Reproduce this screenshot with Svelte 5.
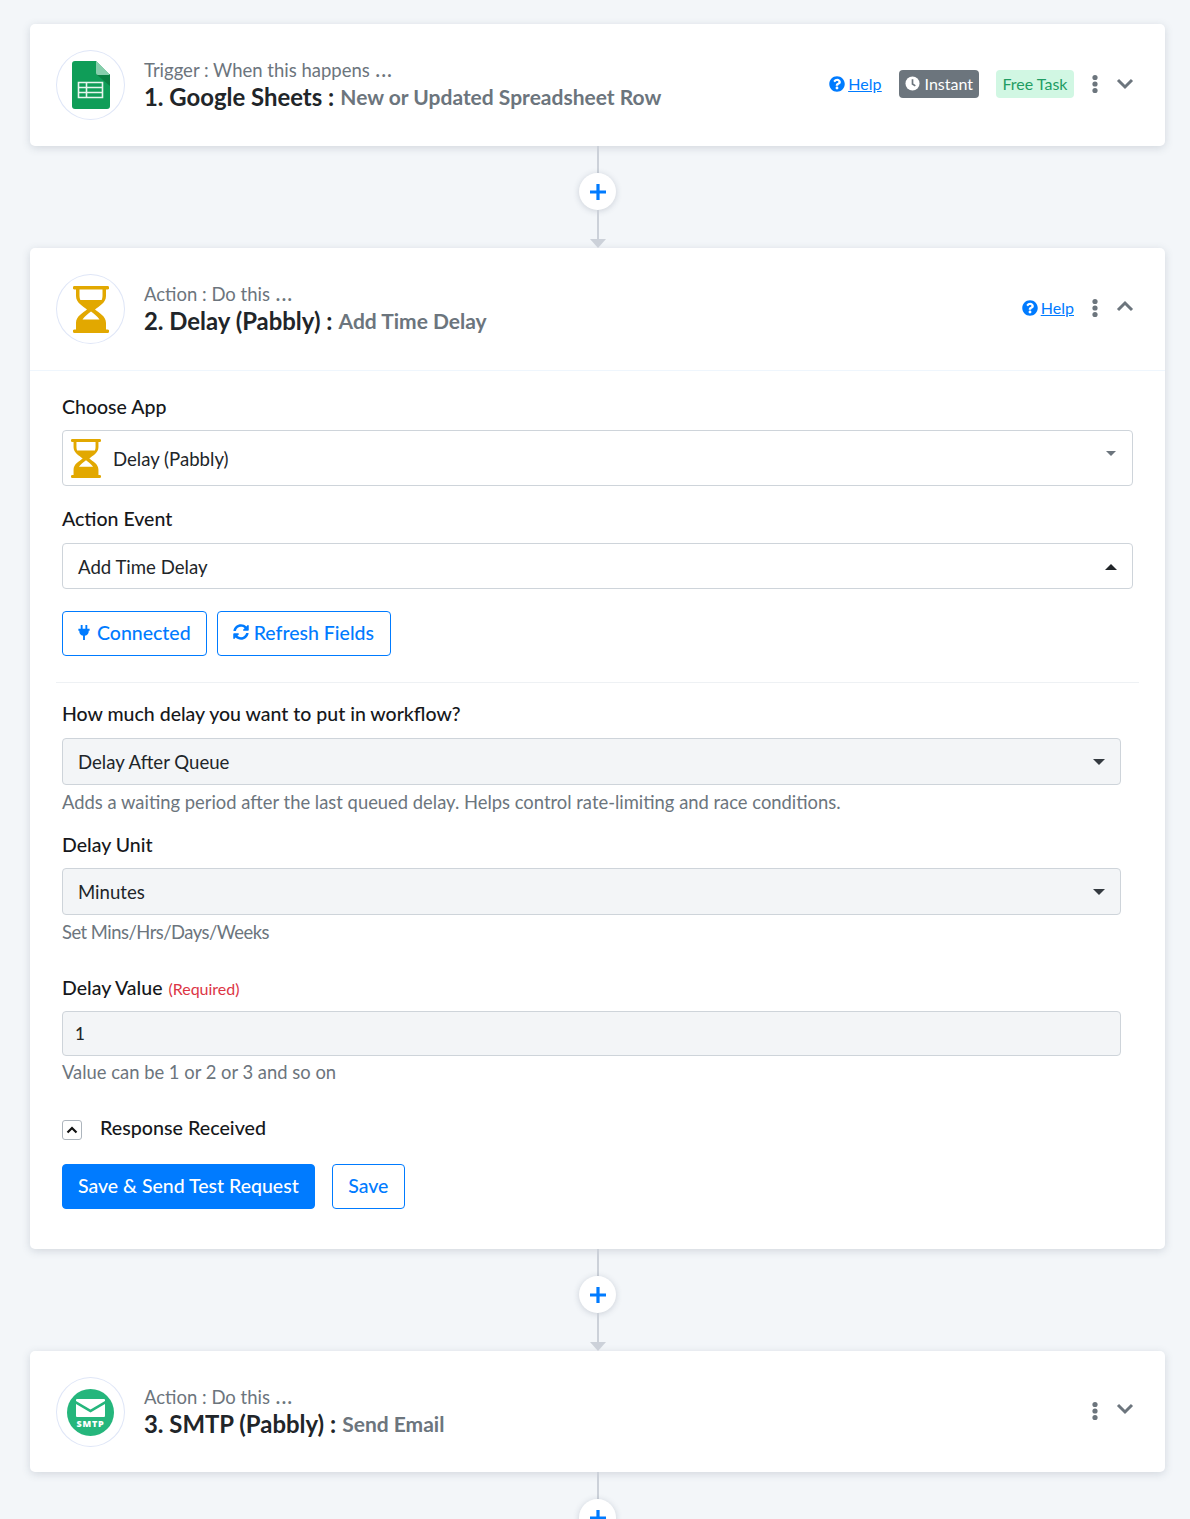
<script>
    const glassOuter = "M1.500 0h33a1.500 1.500 0 0 1 0 3.500H33V10c0 7-7 10-11 13.500 4 3.500 11 6.500 11 13.500v6.500h1.500a1.500 1.500 0 0 1 0 3.500h-33a1.500 1.500 0 0 1 0-3.500H3V37c0-7 7-10 11-13.500C10 20 3 17 3 10V3.500H1.500a1.500 1.500 0 0 1 0-3.500z";
    const glassInner = "M6.500 3.500h23V10c0 1.500-.3 2.800-.8 4H7.300c-.5-1.200-.8-2.500-.8-4z M18 25.500c-3 2.500-6.500 4.500-8.500 8h17c-2-3.500-5.500-5.500-8.500-8z";
</script>

{#snippet more()}
    <svg class="more" viewBox="0 0 8 20" width="8" height="20">
        <circle cx="4" cy="3.500" r="2.600" />
        <circle cx="4" cy="10" r="2.600" />
        <circle cx="4" cy="16.500" r="2.600" />
    </svg>
{/snippet}

{#snippet chevron(up)}
    <svg class="chevron" viewBox="0 0 18 12" width="18" height="12">
        <path d={up ? "M2 10l7-7 7 7" : "M2 2l7 7 7-7"} fill="none" stroke-width="3" />
    </svg>
{/snippet}

{#snippet help()}
    <a class="help" href="#help">
        <svg viewBox="0 0 512 512" width="16" height="16">
            <path fill="#007bff" d="M504 256c0 136.997-111.043 248-248 248S8 392.997 8 256C8 119.083 119.043 8 256 8s248 111.083 248 248zM262.655 90c-54.497 0-89.255 22.957-116.549 63.758-3.536 5.286-2.353 12.415 2.715 16.258l34.699 26.31c5.205 3.947 12.621 3.008 16.665-2.122 17.864-22.658 30.113-35.797 57.303-35.797 20.429 0 45.698 13.148 45.698 32.958 0 14.976-12.363 22.667-32.534 33.976C247.128 238.528 216 254.941 216 296v4c0 6.627 5.373 12 12 12h56c6.627 0 12-5.373 12-12v-1.333c0-28.462 83.186-29.647 83.186-106.667 0-58.002-60.165-102-116.531-102zM256 338c-25.365 0-46 20.635-46 46 0 25.364 20.635 46 46 46s46-20.636 46-46c0-25.365-20.635-46-46-46z" />
        </svg>
        <span>Help</span>
    </a>
{/snippet}

{#snippet connector()}
    <div class="connector">
        <div class="line top"></div>
        <button class="add" aria-label="Add step">
            <svg viewBox="0 0 16 16" width="16" height="16">
                <path d="M8 0v16M0 8h16" stroke="#007bff" stroke-width="3.200" />
            </svg>
        </button>
        <div class="line bottom"></div>
        <div class="arrow"></div>
    </div>
{/snippet}

<div class="page">
    <section class="card">
        <header class="head">
            <div class="logo">
                <svg viewBox="0 0 38 48" width="38" height="48">
                    <path d="M3 0h21l14 14v31a3 3 0 0 1-3 3H3a3 3 0 0 1-3-3V3a3 3 0 0 1 3-3z" fill="#0f9d58" />
                    <path d="M24 13l14 12V13z" fill="#0b8043" />
                    <path d="M24 0l14 14H26a2 2 0 0 1-2-2z" fill="#87ceac" />
                    <path d="M6.500 21.500h24v15h-24z M6.500 26.500h24 M6.500 31.500h24 M14.500 21.500v15" fill="none" stroke="#e8f5ee" stroke-width="1.600" />
                </svg>
            </div>
            <div class="titles">
                <div class="kicker">Trigger : When this happens <b>...</b></div>
                <div class="title"><strong>1. Google Sheets :</strong> <span>New or Updated Spreadsheet Row</span></div>
            </div>
            <div class="tools">
                {@render help()}
                <span class="badge instant">
                    <svg viewBox="0 0 16 16" width="15" height="15">
                        <circle cx="8" cy="8" r="7.500" fill="#fff" />
                        <path d="M8 3.500V8.500l3 2" fill="none" stroke="#6c757d" stroke-width="1.800" />
                    </svg>
                    Instant
                </span>
                <span class="badge free">Free Task</span>
                {@render more()}
                {@render chevron(false)}
            </div>
        </header>
    </section>

    {@render connector()}

    <section class="card">
        <header class="head bordered">
            <div class="logo">
                <svg viewBox="0 0 36 47" width="36" height="47">
                    <path d={glassOuter} fill="#e2a800" />
                    <path d={glassInner} fill="#fff" />
                </svg>
            </div>
            <div class="titles">
                <div class="kicker">Action : Do this <b>...</b></div>
                <div class="title"><strong>2. Delay (Pabbly) :</strong> <span>Add Time Delay</span></div>
            </div>
            <div class="tools raised">
                {@render help()}
                {@render more()}
                {@render chevron(true)}
            </div>
        </header>

        <div class="body">
            <div class="label first">Choose App</div>
            <div class="select app">
                <svg viewBox="0 0 36 47" width="30" height="39">
                    <path d={glassOuter} fill="#e2a800" />
                    <path d={glassInner} fill="#fff" />
                </svg>
                <span>Delay (Pabbly)</span>
                <i class="caret small"></i>
            </div>

            <div class="label event">Action Event</div>
            <div class="select plain">
                <span>Add Time Delay</span>
                <i class="caret up"></i>
            </div>

            <div class="actions top">
                <button class="btn outline connected">
                    <svg viewBox="0 0 12 16" width="12" height="15">
                        <path d="M2.500 0h2v4h3V0h2v4H12v2h-1v1c0 2-1.500 4-4 4.500V16H5v-4.500c-2.500-.5-4-2.500-4-4.500V6H0V4h2.500z" fill="#007bff" />
                    </svg>
                    Connected
                </button>
                <button class="btn outline refresh">
                    <svg viewBox="0 0 512 512" width="16" height="16">
                        <path fill="#007bff" d="M370.720 133.280C339.458 104.008 298.888 87.962 255.848 88c-77.458.068-144.328 53.178-162.791 126.850-1.344 5.363-6.122 9.150-11.651 9.150H24.103c-7.498 0-13.194-6.807-11.807-14.176C33.933 94.924 134.813 8 256 8c66.448 0 126.791 26.136 171.315 68.685L463.030 40.970C478.149 25.851 504 36.559 504 57.941V192c0 13.255-10.745 24-24 24H345.941c-21.382 0-32.090-25.851-16.971-40.971l41.750-41.749zM32 296h134.059c21.382 0 32.090 25.851 16.971 40.971l-41.750 41.750c31.262 29.273 71.835 45.319 114.876 45.280 77.418-.07 144.315-53.144 162.787-126.849 1.344-5.363 6.122-9.150 11.651-9.150h57.304c7.498 0 13.194 6.807 11.807 14.176C478.067 417.076 377.187 504 256 504c-66.448 0-126.791-26.136-171.315-68.685L48.970 471.030C33.851 486.149 8 475.441 8 454.059V320c0-13.255 10.745-24 24-24z" />
                    </svg>
                    Refresh Fields
                </button>
            </div>

            <hr />

            <div class="label ask">How much delay you want to put in workflow?</div>
            <div class="select filled">
                <span>Delay After Queue</span>
                <i class="caret"></i>
            </div>
            <div class="hint">Adds a waiting period after the last queued delay. Helps control rate-limiting and race conditions.</div>

            <div class="label unit">Delay Unit</div>
            <div class="select filled">
                <span>Minutes</span>
                <i class="caret"></i>
            </div>
            <div class="hint tight">Set Mins/Hrs/Days/Weeks</div>

            <div class="label value">Delay Value <small>(Required)</small></div>
            <div class="select filled input"><span>1</span></div>
            <div class="hint">Value can be 1 or 2 or 3 and so on</div>

            <div class="response">
                <span class="toggle">
                    <svg viewBox="0 0 12 8" width="12" height="8">
                        <path d="M1.500 6.500L6 2l4.500 4.500" fill="none" stroke="#111" stroke-width="2.200" />
                    </svg>
                </span>
                Response Received
            </div>

            <div class="actions bottom">
                <button class="btn primary">Save &amp; Send Test Request</button>
                <button class="btn outline save">Save</button>
            </div>
        </div>
    </section>

    {@render connector()}

    <section class="card">
        <header class="head last">
            <div class="logo">
                <svg viewBox="0 0 47 47" width="47" height="47">
                    <circle cx="23.500" cy="23.500" r="23.500" fill="#25b67c" />
                    <path d="M10 10h27a1 1 0 0 1 1 1v1L23.500 20.500 9 12v-1a1 1 0 0 1 1-1z" fill="#fff" />
                    <path d="M9 15L23.500 23.500 38 15V27a1 1 0 0 1-1 1H10a1 1 0 0 1-1-1z" fill="#fff" />
                    <text x="23.500" y="37.500" text-anchor="middle" class="smtp">SMTP</text>
                </svg>
            </div>
            <div class="titles">
                <div class="kicker">Action : Do this <b>...</b></div>
                <div class="title"><strong>3. SMTP (Pabbly) :</strong> <span>Send Email</span></div>
            </div>
            <div class="tools raised">
                {@render more()}
                {@render chevron(false)}
            </div>
        </header>
    </section>

    {@render connector()}
</div>

<style>
    :global(body) {
        background: #f3f6f9;
    }

    .page {
        height: 1519px;
        overflow: hidden;
        box-sizing: border-box;
        padding: 24px 25px 0 30px;
        font-family: Lato, "Noto Sans", sans-serif;
        color: #212529;
    }

    .card {
        background: #fff;
        border-radius: 5px;
        box-shadow: 0 2px 8px rgba(60, 75, 100, 0.18);
    }

    .head {
        height: 122px;
        box-sizing: border-box;
        padding: 26px 31px 0 26px;
        display: flex;
        align-items: flex-start;
    }

    .head.bordered {
        border-bottom: 1px solid #eff6fd;
        height: 123px;
    }

    .head.last {
        height: 121px;
    }

    .logo {
        width: 69px;
        height: 70px;
        box-sizing: border-box;
        border: 1px solid #dfe6f7;
        border-radius: 50%;
        display: flex;
        align-items: center;
        justify-content: center;
        flex-shrink: 0;
    }

    .titles {
        margin-left: 19px;
        padding-top: 8px;
    }

    .kicker {
        font-size: 18.500px;
        line-height: 24px;
        color: #6c757d;
    }

    .kicker b {
        font-weight: 700;
        letter-spacing: 1.500px;
        margin-left: 1px;
    }

    .title {
        font-size: 23.900px;
        line-height: 30px;
        margin-top: -1px;
    }

    .title strong {
        position: relative;
        top: 1px;
        font-weight: 700;
        color: #212529;
    }

    .title span {
        font-weight: 700;
        font-size: 21px;
        color: #6c757d;
    }

    .tools {
        margin-left: auto;
        display: flex;
        align-items: center;
        height: 28px;
        margin-top: 20px;
    }

    .tools.raised {
        margin-top: 18px;
    }

    .raised .help,
    .raised .more {
        margin-top: 4px;
    }

    .help {
        display: flex;
        align-items: center;
        gap: 3px;
        font-size: 16px;
        color: #007bff;
        margin-right: 17px;
    }

    .help span {
        text-decoration: underline;
        margin-bottom: 2px;
    }

    .badge {
        height: 28px;
        box-sizing: border-box;
        display: flex;
        align-items: center;
        font-size: 16px;
        border-radius: 4px;
    }

    .instant {
        background: #6c757d;
        color: #fff;
        padding: 0 6px 2px;
        gap: 5px;
        margin-right: 17px;
    }

    .free {
        background: #d1f7e3;
        color: #1f9d63;
        padding: 0 6.500px 2px;
        margin-right: 17px;
    }

    .more {
        fill: #6c757d;
        margin-right: 17px;
    }

    .chevron {
        stroke: #6c757d;
    }

    .connector {
        height: 102px;
        display: flex;
        flex-direction: column;
        align-items: center;
    }

    .line {
        width: 2px;
        background: #ccd1d9;
    }

    .line.top {
        height: 27px;
    }

    .line.bottom {
        flex: 1;
    }

    .add {
        width: 37px;
        height: 37px;
        padding: 0;
        border: none;
        border-radius: 50%;
        background: #fff;
        box-shadow: 0 1px 6px rgba(60, 75, 100, 0.22);
        display: flex;
        align-items: center;
        justify-content: center;
        flex-shrink: 0;
    }

    .arrow {
        width: 0;
        height: 0;
        margin-top: -1px;
        border-left: 8px solid transparent;
        border-right: 8px solid transparent;
        border-top: 9px solid #ccd1d9;
    }

    .body {
        padding: 0 32px 40px;
    }

    .label {
        font-size: 19.500px;
        font-weight: 500;
        line-height: 24px;
        color: #16181b;
        margin-bottom: 11px;
    }

    .label.first {
        padding-top: 24px;
    }

    .label.event,
    .label.ask {
        margin-bottom: 12px;
    }

    .label.event {
        margin-top: 21px;
    }

    .label.unit {
        margin-top: 19px;
    }

    .label.value {
        margin-top: 32px;
        margin-bottom: 10px;
    }

    .label small {
        font-size: 16px;
        color: #dc3545;
        font-weight: 400;
        margin-left: 1px;
    }

    .select {
        box-sizing: border-box;
        height: 47px;
        padding: 2px 15px 0;
        border: 1px solid #ced4da;
        border-radius: 4px;
        display: flex;
        align-items: center;
        font-size: 18.600px;
        color: #212529;
    }

    .select.app {
        height: 56px;
        padding: 0 16px 0 8px;
        gap: 12px;
    }

    .select.app span {
        padding-top: 2px;
    }

    .select.plain {
        height: 46px;
    }

    .select.filled {
        background: #f3f5f7;
        margin-right: 12px;
        padding-top: 0;
    }

    .select.input {
        height: 45px;
        padding: 0 12px;
    }

    .select.input span {
        font-size: 17px;
        font-weight: 500;
    }

    .caret {
        margin-left: auto;
        width: 0;
        height: 0;
        border-left: 6px solid transparent;
        border-right: 6px solid transparent;
        border-top: 6px solid #343a40;
    }

    .caret.small {
        border-left-width: 5px;
        border-right-width: 5px;
        border-top: 5px solid #6c757d;
        margin-top: -9px;
    }

    .caret.up {
        border-top: none;
        border-bottom: 6px solid #212529;
    }

    .actions {
        display: flex;
    }

    .actions.top {
        margin-top: 22px;
        gap: 10px;
    }

    .actions.bottom {
        margin-top: 24px;
        gap: 17px;
    }

    .btn {
        height: 45px;
        box-sizing: border-box;
        padding: 0 15px 3px;
        border-radius: 4px;
        font-family: inherit;
        font-size: 19.500px;
        font-weight: 500;
        display: flex;
        align-items: center;
        gap: 6px;
    }

    .btn.connected {
        gap: 7px;
    }

    .btn.refresh {
        gap: 5px;
        padding-right: 16px;
    }

    .btn.save {
        padding: 0 15.500px 3px;
    }

    .outline {
        background: #fff;
        border: 1px solid #007bff;
        color: #007bff;
    }

    .primary {
        background: #007bff;
        border: 1px solid #007bff;
        color: #fff;
    }

    hr {
        margin: 26px -6px 19px;
        border: none;
        border-top: 1px solid #eef1f4;
    }

    .hint {
        font-size: 18.400px;
        line-height: 24px;
        color: #6c757d;
        margin-top: 5px;
    }

    .select.input + .hint {
        margin-top: 4px;
    }

    .hint.tight {
        letter-spacing: -0.500px;
    }

    .response {
        display: flex;
        align-items: center;
        margin-top: 32px;
        font-size: 19.700px;
        font-weight: 500;
        line-height: 24px;
        color: #16181b;
    }

    .toggle {
        width: 20px;
        height: 20px;
        box-sizing: border-box;
        border: 1px solid #adb5bd;
        border-radius: 3px;
        display: flex;
        align-items: center;
        justify-content: center;
        margin: 3px 18px 0 0;
    }

    .smtp {
        font-family: "Open Sans", sans-serif;
        font-size: 9px;
        font-weight: 800;
        letter-spacing: 0.800px;
        fill: #fff;
    }
</style>
